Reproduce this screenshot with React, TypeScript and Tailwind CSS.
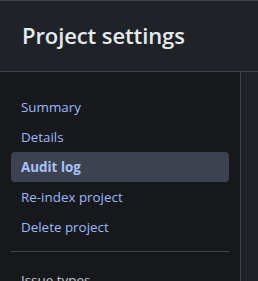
const items = ['Summary', 'Details', 'Audit log', 'Re-index project', 'Delete project'];

export default function App() {
  return (
    <div
      className="w-[258px] h-[281px] overflow-hidden bg-[#1f2227] border-t border-[#3b4048] flex flex-col"
      style={{ fontFamily: '"Open Sans", "Noto Sans", sans-serif' }}
    >
      {/* Header */}
      <div className="h-[70px] shrink-0 flex items-center pl-[22px] pb-[2px]">
        <h1 className="text-[22px] font-semibold text-[#e6e9ee] tracking-[-0.1px]">Project settings</h1>
      </div>

      <div className="flex flex-1 border-t border-[#3d434b] min-h-0">
        {/* Sidebar */}
        <nav className="w-[241px] shrink-0 bg-[#17181c] border-r border-[#3d434b] px-[11px] pt-[20px]">
          <ul className="flex flex-col">
            {items.map((item) => (
              <li key={item}>
                <a
                  className={
                    item === 'Audit log'
                      ? 'flex items-center h-[30px] rounded px-[10px] bg-[#3c434e] text-[13.4px] font-bold text-[#a9c1ff]'
                      : 'flex items-center h-[30px] rounded px-[10px] text-[13.4px] text-[#9cb8fb]'
                  }
                >
                  {item}
                </a>
              </li>
            ))}
          </ul>
          <div className="mt-[9px] border-t border-[#3d434b]" />
          <div className="mt-[18px] px-[10px] text-[13.4px] text-[#c5cbd3]">Issue types</div>
        </nav>
        <div className="flex-1" />
      </div>
    </div>
  );
}
